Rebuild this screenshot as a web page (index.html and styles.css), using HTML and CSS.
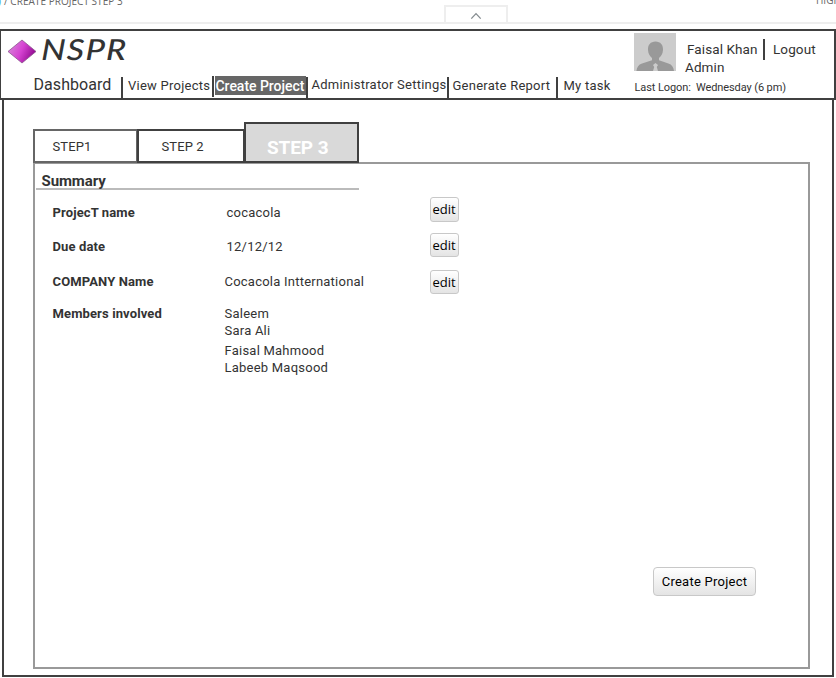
FILE: index.html
```html
<!DOCTYPE html>
<html lang="en">
<head>
<meta charset="utf-8">
<title>NSPR</title>
<link rel="stylesheet" href="styles.css">
</head>
<body>
<div class="topbar">
  <div class="crumbs"><span class="root">)</span><span>/ CREATE PROJECT STEP 3</span></div>
  <div class="toggle"><svg width="12" height="8" viewBox="0 0 12 8"><path d="M1.300 6.600 6 1.600l4.700 5" fill="none" stroke="#858c90" stroke-width="1.300"/></svg></div>
  <div class="highlight">HIGH</div>
</div>
<header class="header">
  <div class="main">
    <div class="brand">
      <svg class="gem" width="30" height="25" viewBox="0 0 30 25"><defs><linearGradient id="g" x1="0" y1=".2" x2="1" y2=".6"><stop offset="0" stop-color="#d68bd8"/><stop offset=".5" stop-color="#d643d2"/><stop offset="1" stop-color="#8d078c"/></linearGradient></defs><path d="M1 12.500 15 1l14 11.500L15 24z" fill="url(#g)" stroke="#8c568e" stroke-width=".8"/></svg>
      <span class="name">NSPR</span>
    </div>
    <nav class="nav">
      <a class="dashboard">Dashboard</a>
      <a class="view">View Projects</a>
      <a class="create">Create Project</a>
      <a class="admin">Administrator Settings</a>
      <a class="report">Generate Report</a>
      <a class="task">My task</a>
    </nav>
  </div>
  <div class="user">
    <div class="profile">
      <svg width="42" height="38" viewBox="0 0 42 38"><path fill="#ccc" d="M0 0h42v38H0z"/><path fill="#999" d="M21.500 8.500c-5 0-7.800 3.500-7.500 8.500.3 4 1.800 6.300 4 8v2.200L8 30.500c-3.500 1.200-5 3.500-5.600 7.500h37.600c-.6-4-2.100-6.300-5.600-7.500L25 27.200V25c2.200-1.700 3.700-4 4-8 .3-5-2.500-8.500-7.500-8.500z"/><path fill="#ccc" d="m19 32 2.500-2 2.500 2-1.200 2L24 38h-5l1.200-4z"/></svg>
      <div class="who">
        <div class="line"><span class="person">Faisal Khan</span><a class="logout">Logout</a></div>
        <div class="role">Admin</div>
      </div>
    </div>
    <div class="logon">Last Logon:&nbsp; Wednesday (6 pm)</div>
  </div>
</header>
<main class="page">
  <div class="tabs">
    <div class="tab first">STEP1</div>
    <div class="tab second">STEP 2</div>
    <div class="tab active">STEP 3</div>
  </div>
  <section class="panel">
    <h2>Summary</h2>
    <div class="row r1"><b>ProjecT name</b><span>cocacola</span><button>edit</button></div>
    <div class="row r2"><b>Due date</b><span>12/12/12</span><button>edit</button></div>
    <div class="row r3"><b>COMPANY Name</b><span>Cocacola Intternational</span><button>edit</button></div>
    <div class="row r4"><b>Members involved</b><div><p>Saleem</p><p>Sara Ali</p><p class="gap">Faisal Mahmood</p><p>Labeeb Maqsood</p></div></div>
    <button class="submit">Create Project</button>
  </section>
</main>
</body>
</html>
```
FILE: styles.css
```css
* { box-sizing: border-box; }
body { margin: 0; height: 678px; overflow: hidden; background: #fff; color: #333; font: 13px/18px Roboto, sans-serif; }
p, h2 { margin: 0; }
a, span, b, p, div { white-space: nowrap; }

.topbar { display: grid; grid-template-columns: 444px 64px 308px 20px; height: 24px; margin-bottom: 5px; border-bottom: 2px solid #eee; font: 10px/14px "Open Sans", sans-serif; color: #666; overflow: hidden; }
.crumbs { margin-top: -6px; display: flex; letter-spacing: .04px; }
.root { width: 4px; color: #35a9dc; text-indent: -2px; overflow: hidden; }
.toggle { margin-top: 5px; border: 2px solid #eee; border-bottom: 0; display: flex; justify-content: center; padding-top: 5px; }
.highlight { margin-top: -7px; grid-column: 4; overflow: hidden; }

.header { display: grid; grid-template-columns: 633px 1fr; height: 71px; border: 2px solid #404040; border-left-width: 1px; }
.brand { display: flex; height: 44px; padding-left: 6px; }
.gem { margin-top: 8px; }
.name { margin: 0 0 0 4px; font: italic 500 29px/36px Lato, sans-serif; letter-spacing: 1.200px; transform: scaleX(1.17) skewX(-2deg); transform-origin: 0 60%; }
.nav { display: flex; height: 23px; }
.nav a { flex: none; height: 21px; margin-top: 2px; padding-left: 5px; }
.dashboard { width: 122px; font-size: 16px; line-height: 16px; border-right: 2px solid #404040; }
.nav .dashboard { padding-left: 32.500px; letter-spacing: .06px; }
.nav .view { width: 91px; margin-top: 1px; line-height: 20px; border-right: 2px solid #404040; }
.nav .create { width: 91px; height: 19px; margin: 1px 0 0 1px; padding-left: .5px; background: #666; color: #fff; font-size: 14px; font-weight: 500; line-height: 20px; letter-spacing: -.03px; }
.nav .admin { width: 143px; line-height: 16px; border: solid #404040; border-width: 0 2px; padding-left: 3.500px; }
.nav .report { width: 109px; border-right: 2px solid #404040; padding-left: 3.500px; }
.nav .task { padding-left: 5.500px; }
.nav .view, .nav .admin, .nav .report, .nav .task { letter-spacing: .25px; }

.profile { display: flex; padding-top: 2px; }
.who { padding-left: 9px; font-size: 13.500px; letter-spacing: .1px; }
.line { display: flex; padding: 6px 0 0 2px; height: 27px; }
.person { width: 78px; height: 21px; padding-top: 1px; border-right: 2px solid #404040; }
.logout { padding: 1px 0 0 8px; }
.role { line-height: 16px; margin-top: -1px; }
.logon { font-size: 11px; line-height: 16px; margin-top: 5px; letter-spacing: -.1px; padding-left: .5px; }

.page { height: 577px; margin: 0 2px; border: 2px solid #404040; border-top: 0; padding: 22px 22px 7px 29px; }
.tabs { position: relative; display: flex; align-items: flex-end; height: 41px; }
.tab { height: 34px; border: 2px solid #404040; padding-top: 7px; }
.first { width: 105px; border-color: #666; padding-left: 17.500px; letter-spacing: .1px; }
.second { width: 108px; margin-left: -1px; padding-left: 22.500px; letter-spacing: .1px; }
.active { width: 115px; height: 41px; margin-left: -1px; padding: 15px 0 0 21px; background: #d9d9d9; color: #fff; font-size: 19px; font-weight: 700; letter-spacing: -.1px; }
.panel { width: 777px; height: 507px; margin-top: -1px; border: 2px solid #999; padding: 7px 0 0 1px; }
.panel h2 { width: 323px; height: 19px; padding-left: 5.500px; border-bottom: 2px solid #bbb; font-size: 15px; line-height: 20px; font-weight: 700; letter-spacing: -.1px; }
.row { display: grid; grid-template-columns: 172px 205.500px 29px; height: 24px; margin-left: 16.500px; letter-spacing: .23px; }
.row b { font-weight: 700; letter-spacing: .12px; }
.r1 { margin-top: 7px; }
.r1 b, .r1 span { padding-top: 7px; }
.r1 span, .r2 span { padding-left: 2px; }
.r2 { margin-top: 12px; }
.r2 b, .r2 span { padding-top: 5px; }
.r3 { margin-top: 13px; }
.r3 b, .r3 span { padding-top: 3px; }
.r4 { margin-top: 11px; height: 75px; }
.row p { line-height: 17px; }
.row .gap { margin-top: 3px; }
button { display: block; padding: 0; border: 1px solid #c8c8c8; border-radius: 3px; background: linear-gradient(#fff, #e4e4e4); color: #000; font: 13px/20px "Open Sans", sans-serif; }
.row button { padding-right: 1px; }
.r1 button { padding-bottom: 1px; }
.submit { width: 103px; height: 29px; margin: 187px 0 0 617px; font: 13px/20px Roboto, sans-serif; letter-spacing: .25px; border-radius: 4px; }
```
